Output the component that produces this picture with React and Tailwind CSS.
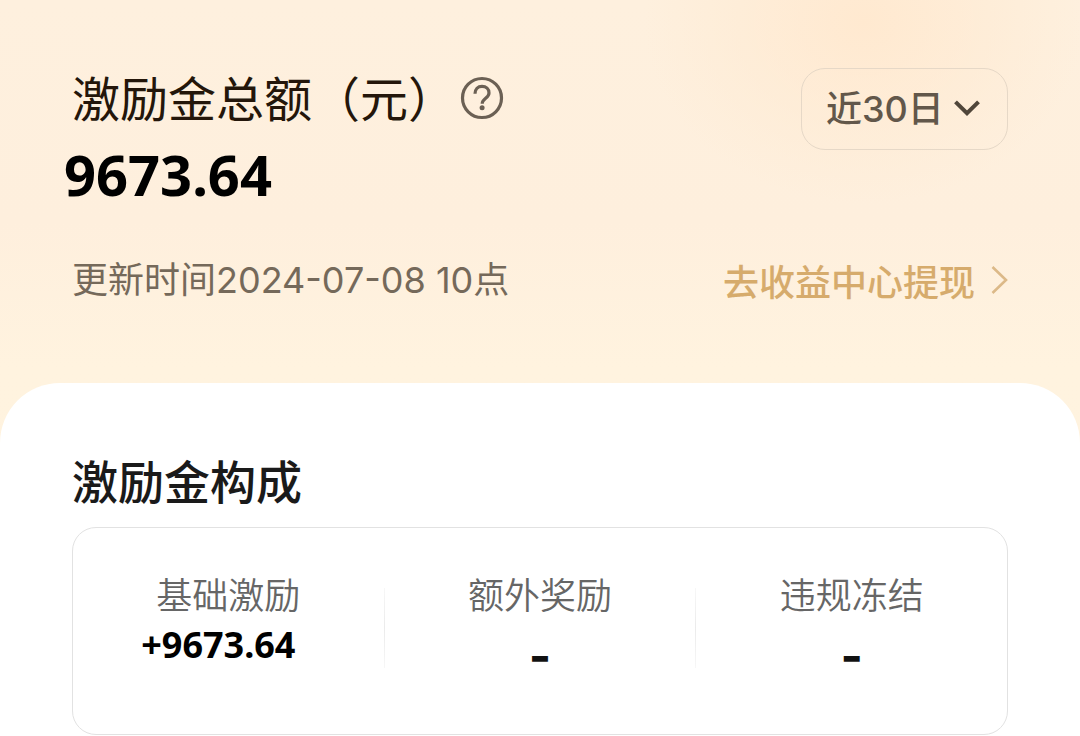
import React from "react";

const cjk = "font-['Noto_Sans_CJK_SC',sans-serif]";
const mixed = "font-['Inter','Noto_Sans_CJK_SC',sans-serif]";
const figures = "font-['Noto_Sans',sans-serif]";

function HelpIcon() {
  return (
    <svg viewBox="0 0 44 44" className="size-11" fill="none" stroke="#6b6054" strokeWidth="3.2" aria-hidden="true">
      <circle cx="22" cy="22" r="19.5" />
      <path d="M15 17.8c0-4.6 2.9-7.4 7-7.4s7 2.7 7 6.5c0 5.2-6.8 5.4-6.8 10.8" />
      <circle cx="22.1" cy="31.8" r="2.5" fill="#6b6054" stroke="none" />
    </svg>
  );
}

function Metric({ label, children }) {
  return (
    <div className="flex flex-1 flex-col items-center">
      <dt className="text-[36px] leading-[50px] font-[350] text-[#666666]">{label}</dt>
      {children}
    </div>
  );
}

function Divider() {
  return <div aria-hidden="true" className="mt-5 h-20 w-px bg-linear-to-b from-[#f7f7f7] via-[#ebebeb] to-[#f7f7f7]" />;
}

export default function App() {
  return (
    <main
      className={`${cjk} flex min-h-screen flex-col bg-[#fff2df] bg-[radial-gradient(ellipse_at_80%_3%,#ffe9d0_0%,transparent_18%),linear-gradient(180deg,#fef0de_0%,#feefdd_30%,#fff3df_50%,#fff2de_100%)]`}
    >
      <header className="flex flex-col px-18 pt-16 pb-[75px]">
        <div className="flex items-start justify-between">
          <div>
            <div className="flex items-start gap-1">
              <h1 className="text-[48px] leading-[64px] text-[#24160a]">激励金总额（元）</h1>
              <button type="button" aria-label="激励金说明" className="mt-3">
                <HelpIcon />
              </button>
            </div>
            <p className={`${figures} -ml-2 mt-3 text-[56px] leading-[68px] font-bold text-black`}>9673.64</p>
          </div>
          <div className="relative mt-1">
            <select
              aria-label="统计周期"
              className={`${mixed} h-[82px] w-[207px] appearance-none rounded-3xl border border-[#e6d8c7] bg-transparent pl-6 text-[36px] font-medium text-[#62574a]`}
            >
              <option>近30日</option>
            </select>
            <svg viewBox="0 0 26 16" className="pointer-events-none absolute top-8 right-7 h-4 w-[26px]" fill="none" stroke="#50463a" strokeWidth="4" aria-hidden="true">
              <path d="M1.5 1.8 13 13.2 24.5 1.8" />
            </svg>
          </div>
        </div>
        <div className="mt-11 flex items-center justify-between">
          <p className={`${mixed} text-[36px] leading-[56px] font-normal text-[#75695a]`}>更新时间2024-07-08 10点</p>
          <a href="#withdraw" className="flex items-center gap-4 text-[36px] leading-[56px] font-medium text-[#d6ab6c]">
            去收益中心提现
            <svg viewBox="0 0 17 28" className="h-7 w-[17px]" fill="none" stroke="#dcb988" strokeWidth="2.6" aria-hidden="true">
              <path d="M1.5 1 15 14 1.5 27" />
            </svg>
          </a>
        </div>
      </header>
      <section className="grow rounded-t-[60px] bg-white px-18 pt-16">
        <h2 className="text-[46px] leading-[64px] font-medium text-[#1a1a1a]">激励金构成</h2>
        <dl className="mt-4 flex h-[208px] rounded-3xl border border-[#e2e2e2] pt-10">
          <Metric label="基础激励">
            <dd className={`${figures} -ml-5 text-[36px] leading-[54px] font-bold text-black`}>+9673.64</dd>
          </Metric>
          <Divider />
          <Metric label="额外奖励">
            <dd className={`${mixed} mt-2 text-[48px] leading-[60px] font-bold text-[#111111]`}>-</dd>
          </Metric>
          <Divider />
          <Metric label="违规冻结">
            <dd className={`${mixed} mt-2 text-[48px] leading-[60px] font-bold text-[#111111]`}>-</dd>
          </Metric>
        </dl>
      </section>
    </main>
  );
}
